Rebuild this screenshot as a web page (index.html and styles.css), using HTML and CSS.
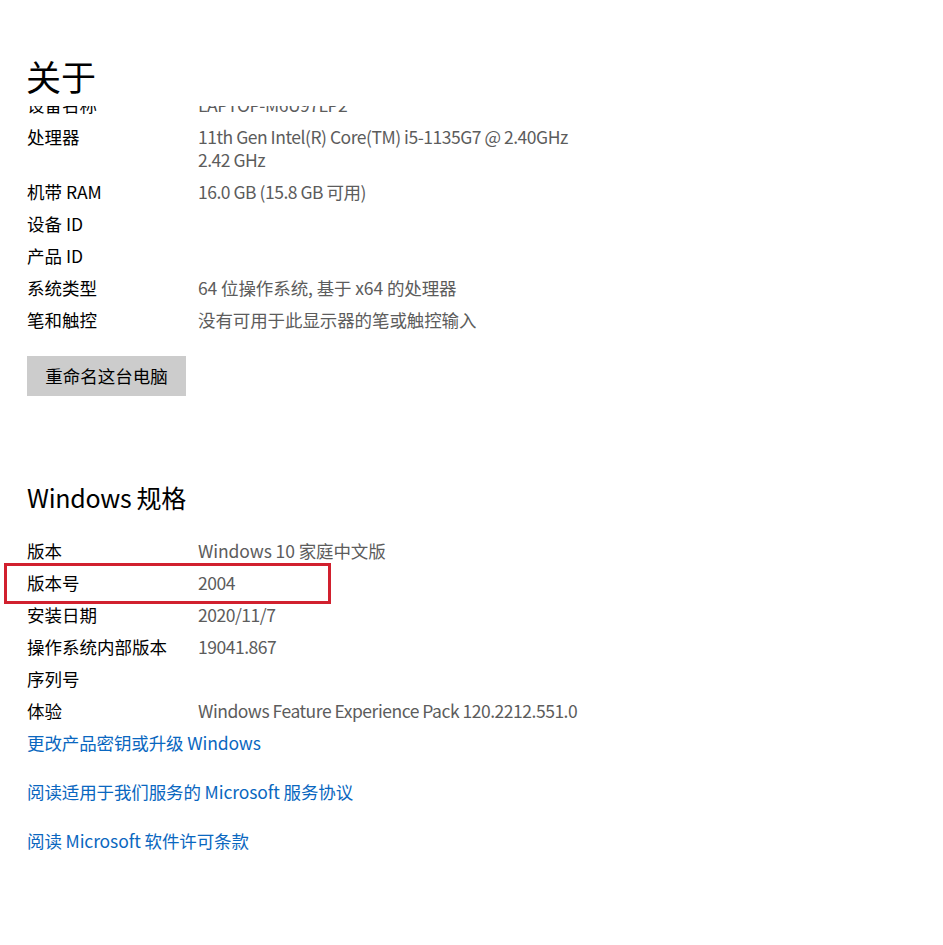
FILE: index.html
```html
<!DOCTYPE html>
<html lang="zh-CN">
<head>
<meta charset="utf-8">
<title>关于</title>
<link rel="stylesheet" href="styles.css">
</head>
<body>
<div class="page">
  <header class="header"><h1 class="title">关于</h1></header>
  <div class="viewport">
    <div class="content">
      <div class="specs">
        <div class="row"><div class="label">设备名称</div><div class="value">LAPTOP-M6U97LP2</div></div>
        <div class="row"><div class="label">处理器</div><div class="value">11th Gen Intel(R) Core(TM) i5-1135G7 @ 2.40GHz<br>2.42 GHz</div></div>
        <div class="row"><div class="label">机带 RAM</div><div class="value">16.0 GB (15.8 GB 可用)</div></div>
        <div class="row"><div class="label">设备 ID</div><div class="value"></div></div>
        <div class="row"><div class="label">产品 ID</div><div class="value"></div></div>
        <div class="row"><div class="label">系统类型</div><div class="value cjk">64 位操作系统, 基于 x64 的处理器</div></div>
        <div class="row"><div class="label">笔和触控</div><div class="value cjk">没有可用于此显示器的笔或触控输入</div></div>
      </div>
      <button class="btn">重命名这台电脑</button>
      <h2 class="section">Windows 规格</h2>
      <div class="specs">
        <div class="row"><div class="label">版本</div><div class="value cjk">Windows 10 家庭中文版</div></div>
        <div class="row highlight"><div class="label">版本号</div><div class="value">2004</div><span class="mark"></span></div>
        <div class="row"><div class="label">安装日期</div><div class="value">2020/11/7</div></div>
        <div class="row"><div class="label">操作系统内部版本</div><div class="value">19041.867</div></div>
        <div class="row"><div class="label">序列号</div><div class="value"></div></div>
        <div class="row"><div class="label">体验</div><div class="value">Windows Feature Experience Pack 120.2212.551.0</div></div>
      </div>
      <div class="links">
        <a class="link" href="#">更改产品密钥或升级 Windows</a>
        <a class="link" href="#">阅读适用于我们服务的 Microsoft 服务协议</a>
        <a class="link" href="#">阅读 Microsoft 软件许可条款</a>
      </div>
    </div>
  </div>
</div>
</body>
</html>
```

FILE: styles.css
```css
html, body {
  margin: 0;
  padding: 0;
  background: #ffffff;
}
body {
  font-family: "Noto Sans CJK SC", "Noto Sans", sans-serif;
  color: #000;
  font-size: 17.5px;
}
.header {
  height: 106px;
  display: flex;
  align-items: flex-start;
  padding-left: 26px;
}
.title {
  margin: 0;
  margin-top: 54px;
  font-size: 35px;
  line-height: 44px;
  font-weight: 400;
}
.viewport {
  overflow: hidden;
}
.content {
  margin-top: -16px;
  padding-left: 27px;
}
.specs {
  display: flex;
  flex-direction: column;
}
.row {
  display: grid;
  grid-template-columns: 171px auto;
  padding: 3px 0 6px;
  line-height: 23px;
  position: relative;
}
.label {
  color: #000;
}
.value {
  color: #5c5c5c;
  letter-spacing: -0.48px;
}
.value.cjk {
  letter-spacing: -0.1px;
}
.highlight .mark {
  position: absolute;
  left: -23px;
  top: -5.5px;
  width: 327px;
  height: 41px;
  box-sizing: border-box;
  border: 3px solid #d1202e;
}
.btn {
  display: block;
  margin-top: 19px;
  width: 159px;
  height: 40px;
  border: none;
  background: #cccccc;
  font-family: inherit;
  font-size: 17.5px;
  color: #000;
  padding: 0 0 1px;
}
.section {
  margin: 84px 0 22px;
  font-size: 25px;
  line-height: 34px;
  font-weight: 400;
  letter-spacing: -0.3px;
}
.links {
  display: flex;
  flex-direction: column;
  gap: 17px;
  align-items: flex-start;
}
.link {
  color: #0a67c0;
  text-decoration: none;
  padding: 3px 0 6px;
  line-height: 23px;
  letter-spacing: -0.12px;
}
```
